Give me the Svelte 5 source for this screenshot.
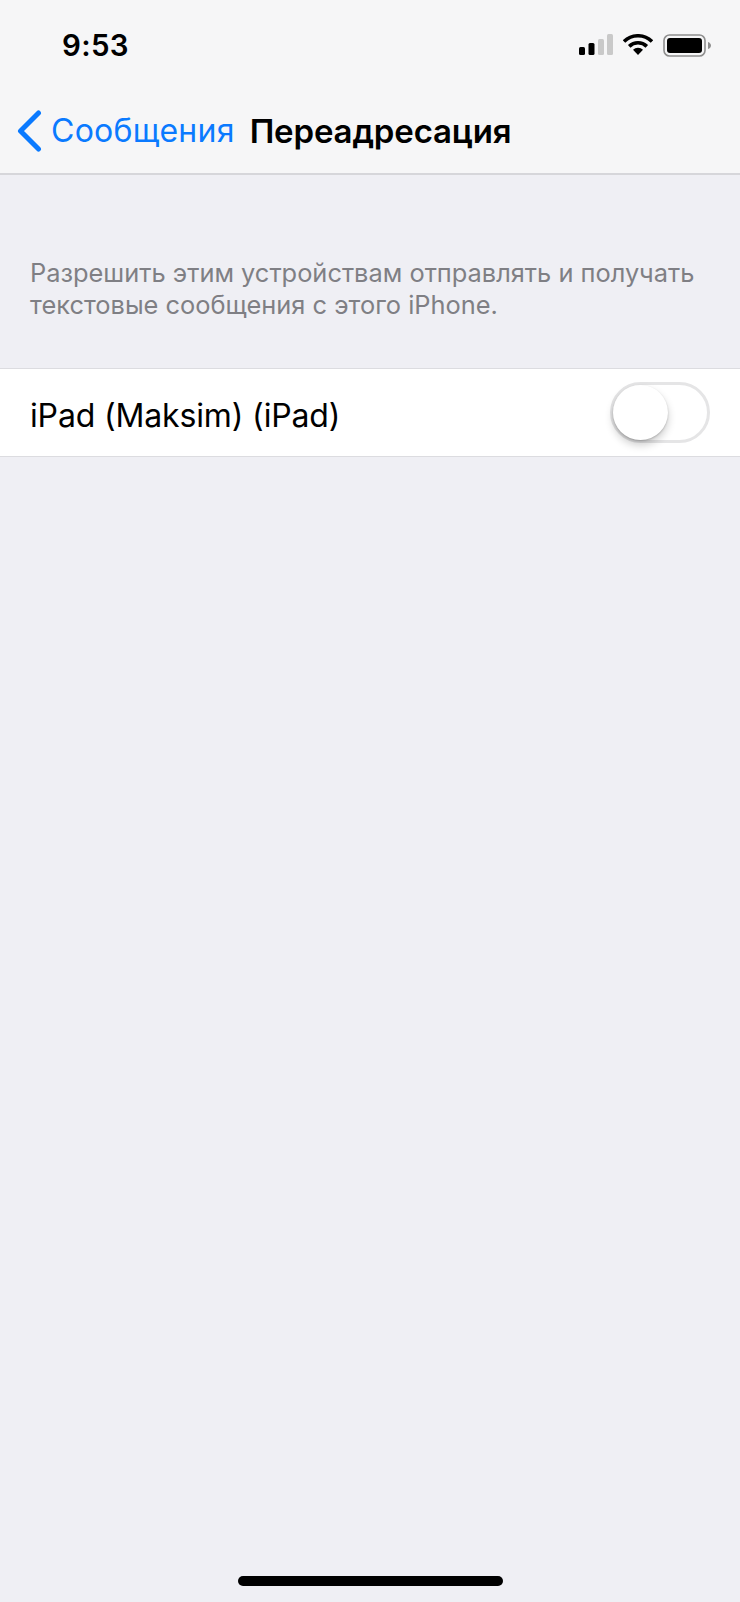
<script>
  const title = 'Переадресация';
</script>

<div class="screen">
  <header class="top">
    <div class="status">
      <span class="time">9:53</span>
      <div class="indicators">
        <svg class="signal" width="34" height="22" viewBox="0 0 34 22" aria-hidden="true">
          <rect x="0" y="13" width="6" height="8" rx="1.5" fill="#000" />
          <rect x="9.5" y="9" width="6" height="12" rx="1.5" fill="#000" />
          <rect x="19" y="5" width="6" height="16" rx="1.5" fill="#c9c9c9" />
          <rect x="28" y="0" width="6" height="21" rx="1.5" fill="#c9c9c9" />
        </svg>
        <svg class="wifi" width="30" height="22" viewBox="0 0 30 22" aria-hidden="true">
          <path d="M1 7.5a20 20 0 0 1 28 0" fill="none" stroke="#000" stroke-width="3.6" />
          <path d="M6.2 12.4a12.6 12.6 0 0 1 17.6 0" fill="none" stroke="#000" stroke-width="3.6" />
          <path d="M15 21l-5-5.2a7 7 0 0 1 10 0z" fill="#000" />
        </svg>
        <svg class="battery" width="49" height="23" viewBox="0 0 49 23" aria-hidden="true">
          <rect x="1" y="1" width="41" height="21" rx="5.5" fill="none" stroke="#8e8e8e" stroke-width="1.6" />
          <rect x="4" y="4" width="35" height="15" rx="3" fill="#000" />
          <path d="M45 8c1.8.5 3 2 3 3.500s-1.200 3-3 3.500z" fill="#8e8e8e" />
        </svg>
      </div>
    </div>
    <nav class="bar">
      <svg class="chevron" width="26" height="42" viewBox="0 0 26 42" aria-hidden="true">
        <path d="M22.500 3 4.500 21l18 18" fill="none" stroke="#0a7aff" stroke-width="5" stroke-linecap="round" stroke-linejoin="round" />
      </svg>
      <span class="back">Сообщения</span>
      <h1>{title}</h1>
    </nav>
  </header>

  <p class="note">Разрешить этим устройствам отправлять и получать<br />текстовые сообщения с этого iPhone.</p>

  <section class="row">
    <span class="label">iPad (Maksim) (iPad)</span>
    <div class="switch"><div class="knob"></div></div>
  </section>

  <div class="home"></div>
</div>

<style>
  :global(body) {
    margin: 0;
    background: #efeff4;
  }
  .screen {
    position: relative;
    height: 1602px;
    overflow: hidden;
    background: #efeff4;
    font-family: Inter, "Liberation Sans", sans-serif;
    color: #000;
  }
  .top {
    height: 173px;
    background: #f6f6f7;
    border-bottom: 2px solid #d6d6da;
  }
  .status {
    box-sizing: border-box;
    height: 88px;
    display: flex;
    align-items: center;
    justify-content: space-between;
    padding: 2px 28px 0 62px;
  }
  .time {
    font-size: 29.5px;
    font-weight: 600;
    letter-spacing: 0.3px;
  }
  .indicators {
    display: flex;
    align-items: center;
    gap: 8px;
  }
  .signal { margin-right: 2px; }
  .battery { margin-left: 2px; }
  .bar {
    height: 85px;
    display: flex;
    align-items: center;
    padding-left: 16px;
  }
  .chevron { flex: none; }
  .back {
    margin-left: 9px;
    font-size: 32px;
    letter-spacing: 0.25px;
    white-space: nowrap;
    color: #0a7aff;
  }
  h1 {
    margin: 0 0 0 15px;
    font-size: 33px;
    font-weight: 600;
    letter-spacing: -0.15px;
    white-space: nowrap;
  }
  .note {
    box-sizing: border-box;
    margin: 0;
    padding: 82px 30px 0;
    height: 194px;
    font-size: 25.4px;
    line-height: 32px;
    white-space: nowrap;
    color: #7f7f84;
  }
  .row {
    box-sizing: border-box;
    height: 89px;
    margin-top: -1px;
    display: flex;
    align-items: center;
    justify-content: space-between;
    padding: 0 30px;
    background: #fff;
    border-top: 1px solid #dcdce0;
    border-bottom: 1px solid #dcdce0;
  }
  .label {
    padding-top: 6px;
    font-size: 32px;
    letter-spacing: -0.15px;
  }
  .switch {
    position: relative;
    box-sizing: border-box;
    width: 100px;
    height: 61px;
    border-radius: 31px;
    border: 3px solid #e5e5e6;
    background: #fff;
  }
  .knob {
    position: absolute;
    left: 0;
    top: 0;
    width: 55px;
    height: 55px;
    border-radius: 50%;
    background: #fff;
    box-shadow: 0 5px 9px rgba(0, 0, 0, 0.2), 0 1px 2px rgba(0, 0, 0, 0.2);
  }
  .home {
    position: absolute;
    left: 238px;
    top: 1576px;
    width: 265px;
    height: 10px;
    border-radius: 5px;
    background: #000;
  }
</style>
